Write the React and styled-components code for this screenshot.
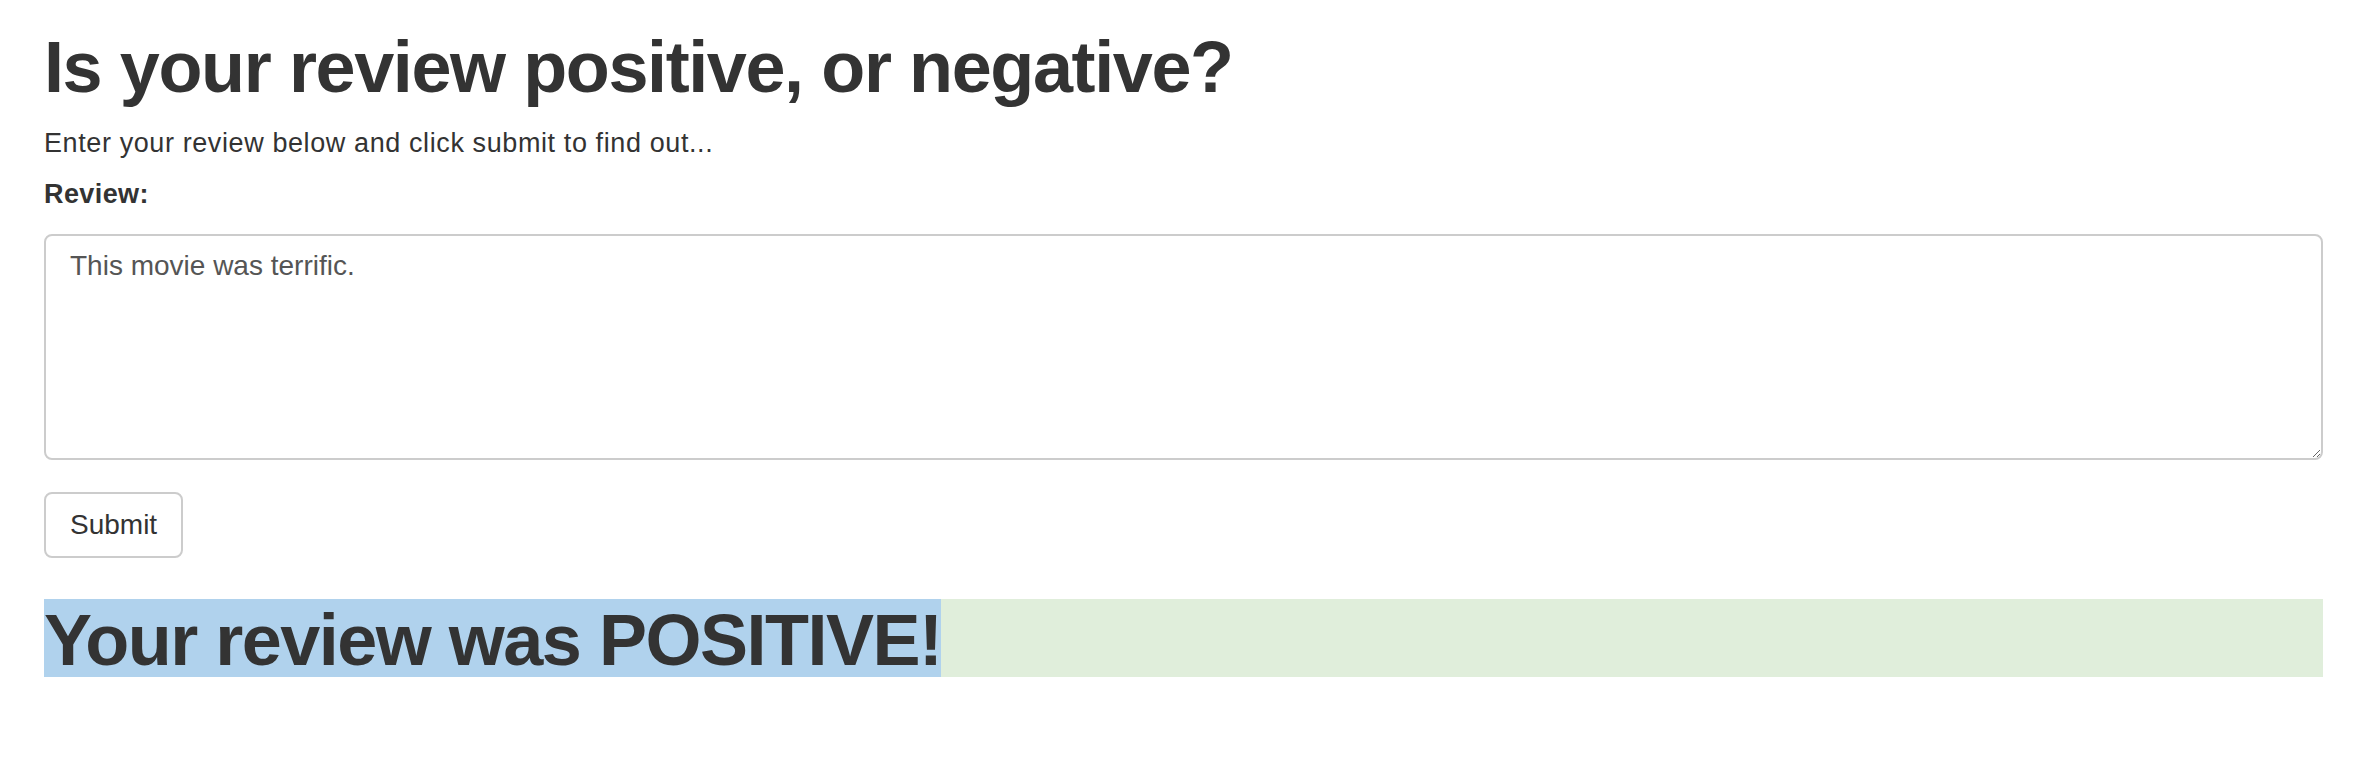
import React from "react";
import styled, { createGlobalStyle } from "styled-components";

const GlobalStyle = createGlobalStyle`
  html, body {
    margin: 0;
    padding: 0;
    background: #fff;
  }
  body {
    font-family: "Liberation Sans", Arial, Helvetica, sans-serif;
    color: #333;
  }
`;

const Container = styled.div`
  padding: 0 53px 0 44px;
  display: flex;
  flex-direction: column;
  align-items: stretch;
`;

const Title = styled.h1`
  margin: 28px 0 0;
  font-size: 72px;
  line-height: 79px;
  font-weight: 700;
  letter-spacing: -1.4px;
  color: #333;
`;

const Intro = styled.p`
  margin: 18px 0 0;
  font-size: 27px;
  line-height: 37px;
  letter-spacing: 0.6px;
`;

const Label = styled.label`
  display: block;
  margin-top: 14px;
  font-size: 27px;
  line-height: 37px;
  font-weight: 700;
  letter-spacing: 0.4px;
`;

const ReviewBox = styled.textarea`
  display: block;
  box-sizing: border-box;
  margin-top: 21px;
  width: 100%;
  height: 226px;
  padding: 10px 24px;
  border: 2px solid #ccc;
  border-radius: 8px;
  font-family: inherit;
  font-size: 28px;
  line-height: 40px;
  color: #555;
  background: #fff;
  outline: none;
  resize: vertical;
`;

const SubmitButton = styled.button`
  align-self: flex-start;
  box-sizing: border-box;
  margin-top: 32px;
  height: 66px;
  padding: 0 24px;
  border: 2px solid #ccc;
  border-radius: 8px;
  background: #fff;
  color: #333;
  font-family: inherit;
  font-size: 28px;
  cursor: pointer;
`;

const Result = styled.h1`
  margin: 41px 0 0;
  height: 78px;
  font-size: 72px;
  line-height: 78px;
  font-weight: 700;
  letter-spacing: -1.5px;
  color: #333;
  background: ${({ tone }) => (tone === "positive" ? "#e0eedb" : "#f2dede")};
`;

const Highlight = styled.span`
  display: inline-block;
  vertical-align: top;
  box-sizing: border-box;
  height: 82px;
  padding-top: 2px;
  line-height: 78px;
  background: #b0d2ed;
`;

export default function App() {
  const review = "This movie was terrific.";
  const tone = "positive";

  return (
    <Container>
      <GlobalStyle />
      <Title>Is your review positive, or negative?</Title>
      <Intro>Enter your review below and click submit to find out...</Intro>
      <Label htmlFor="review">Review:</Label>
      <ReviewBox id="review" defaultValue={review} />
      <SubmitButton type="button">Submit</SubmitButton>
      <Result tone={tone}>
        <Highlight>Your review was POSITIVE!</Highlight>
      </Result>
    </Container>
  );
}
